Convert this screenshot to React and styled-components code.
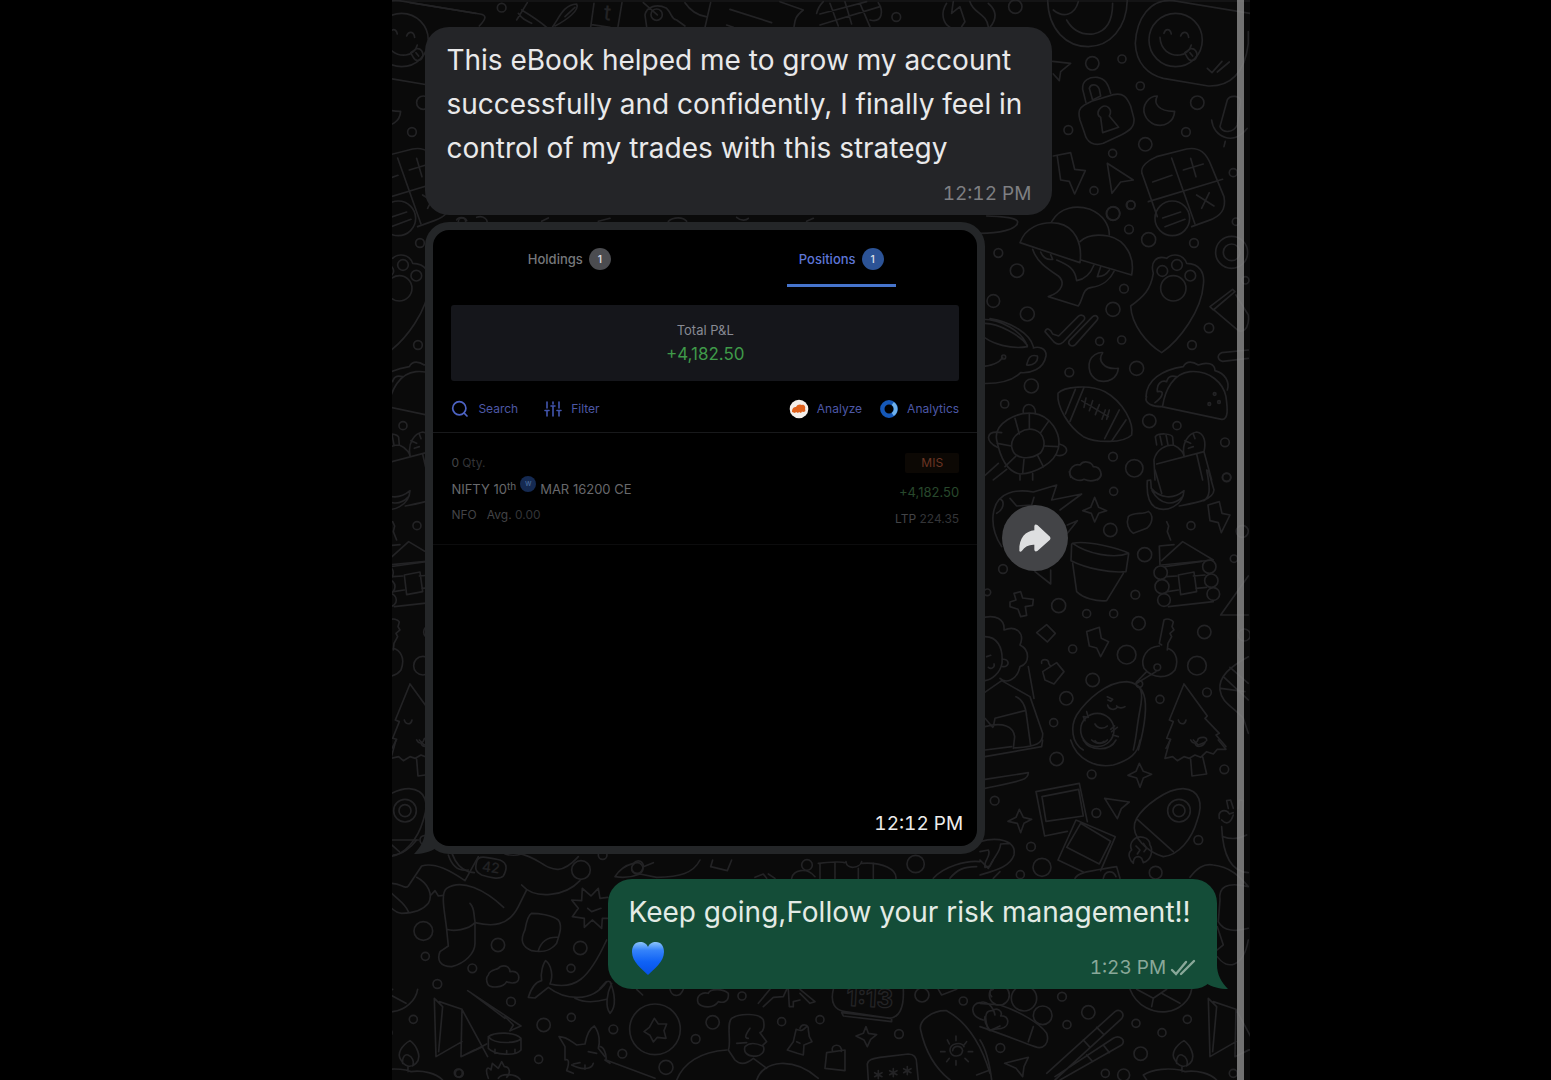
import React from "react";
import styled, { createGlobalStyle } from "styled-components";

// Wallpaper doodles. Each tile has its own origin and is drawn at three times
// its size; circles are [x, y, radius].
const sideTiles = [
  {
    x: 820,
    y: 0,
    paths: [
      "M683 0C685 90 740 140 805 140C870 138 920 85 922 0",
      "M740 60C760 95 790 105 820 102C860 95 878 60 878 10M700 30C730 55 765 45 775 5",
      "M1290 40L1060 2C990 -5 950 55 946 130C948 190 985 225 1030 235L1165 258C1230 260 1275 220 1285 130V95",
      "M1020 112C1022 150 1050 168 1080 165C1100 162 1110 150 1114 135",
      "M1032 100C1036 86 1050 84 1054 102M1082 108C1088 92 1104 94 1106 112",
      "M1094 158L1112 146C1124 144 1134 156 1130 170C1124 186 1108 184 1102 172ZM1110 158L1118 168",
      "M1162 205L1176 218L1206 184M1192 216L1228 186",
      "M698 184L752 190L722 215L718 242L700 222",
      "M798 308L788 268C785 240 810 230 832 232C855 236 864 250 872 280M808 265C812 250 832 252 838 268L842 288L818 300Z",
      "M780 360C770 325 785 318 815 304L880 284C910 278 920 290 932 318L942 356C944 380 930 392 905 404L850 430C820 440 800 425 794 400Z",
      "M842 352L848 398L896 382L868 348C880 325 858 312 844 322C830 332 832 348 842 352",
      "M1012 288C1000 310 1015 335 1064 334C1062 365 1035 382 1005 374C975 362 962 330 980 305C990 292 1002 288 1012 288Z",
      "M1200 380L1222 300C1230 284 1262 286 1262 305L1252 375C1240 400 1208 400 1200 380M1175 360C1180 410 1240 440 1282 385M1216 424L1212 440",
      "M700 468L752 458L764 508L796 512L764 582L748 544L722 540L712 470",
      "M862 490L940 540L902 546L876 580Z",
      "M966 520C960 500 985 480 1010 470L1100 447C1140 440 1160 460 1175 500L1212 590C1220 630 1200 650 1165 662L1115 680",
      "M966 520L1012 650M1055 474L1125 672M985 605L1208 538",
      "M998 546L1056 526M1090 510L1150 492M1112 475L1128 530M1130 585L1182 618M1145 625L1168 578",
    ],
    circles: [
      [1067, 120, 80], [817, 190, 20], [906, 177, 12], [961, 258, 12],
      [1132, 308, 20], [745, 390, 13], [1098, 396, 13], [976, 433, 20],
      [878, 460, 12], [1240, 518, 12], [822, 572, 12], [880, 640, 20],
      [932, 615, 13], [586, 20, 20],
    ],
  },
  {
    x: 980,
    y: 200,
    paths: [
      "M120 128C135 85 180 62 235 70C285 80 308 130 300 188Z",
      "M215 65C240 20 290 15 330 28C370 45 388 75 388 105",
      "M300 125C320 105 350 102 385 108C440 120 465 175 455 225L303 180",
      "M158 148C170 185 200 205 235 228C255 245 250 275 205 290L295 318C310 300 305 265 335 262C370 258 392 235 402 214",
      "M182 156C190 175 205 180 218 178L212 164M230 180C265 195 285 205 290 242C315 238 330 225 342 195M362 200L352 230C372 230 380 222 388 210",
      "M520 220C510 185 530 165 560 175C575 160 610 160 620 190C660 190 675 220 670 255C665 330 600 420 545 458C500 430 455 375 452 318C490 290 512 270 520 220Z",
      "M0 100C50 100 115 90 113 65C108 50 60 50 20 48",
      "M195 395C200 380 212 388 218 402L236 408L294 350C304 340 320 350 312 360L250 426C240 436 232 434 222 426Z",
      "M268 422L338 350C350 342 358 354 350 362L286 434C274 444 262 432 268 422Z",
      "M0 358C60 355 130 395 142 440C100 448 30 435 0 400M15 370C55 370 120 405 142 436M160 440C150 400 90 365 30 356M160 444C175 438 200 445 198 468C190 510 150 520 122 518C90 550 40 552 0 550",
      "M140 495C145 475 150 462 172 468C176 485 160 498 140 495ZM0 500C40 498 58 488 68 472",
      "M368 458C352 480 370 510 415 505C412 535 385 550 355 542C322 528 318 482 345 464C352 460 360 456 368 458Z",
      "M234 580C250 560 330 552 375 575C430 605 462 670 455 705C430 730 350 730 310 710C265 680 230 620 234 580Z",
      "M286 568L256 642M312 562L270 664M418 630L374 716M438 660L396 722",
      "M305 602L385 650M318 594L312 622M338 602L328 632M358 614L346 644M376 630L366 658M388 630L380 658",
      "M498 590C500 540 545 510 610 500C620 480 640 485 655 495C680 485 705 490 705 512C735 520 750 545 742 570M500 590C490 610 520 620 545 620L725 658C750 660 740 610 738 590C730 550 690 510 630 515C580 520 555 570 548 618M525 608C550 590 555 570 532 575C530 550 545 540 560 545C565 525 580 528 590 530",
      "M690 320L758 268L765 275L700 330ZM700 328L775 392C800 400 808 370 805 345L768 285",
      "M805 450L725 458C710 465 712 480 728 484L805 475",
      "M50 720C40 670 110 635 160 640C210 645 245 700 235 745C225 790 165 820 120 822C80 815 60 770 50 720ZM95 740C92 705 135 680 165 690C195 700 200 740 180 760C150 780 100 780 95 740Z",
      "M148 642L148 686M105 655L118 702M52 730L94 738M75 800L108 768M128 820L132 778M190 800L172 765M235 740L192 738M205 665L182 698",
      "M130 638C125 605 168 605 166 640M52 742C15 725 15 690 65 698M228 765C260 775 275 740 238 732M55 790L0 840M80 808L40 840M120 825V840M158 820V840",
      "M272 832C262 805 285 790 300 795C310 780 335 785 340 800C365 800 370 830 352 840",
      "M530 735L526 710C535 698 575 700 578 712L580 735M540 708L546 735M558 704L564 735M525 840L522 780C530 745 560 735 580 735C605 745 612 765 612 768M530 792L672 755L695 840M650 762L668 840M612 765C605 730 625 700 650 696C675 700 678 730 672 755M615 722L632 730M640 702L645 716M625 745L640 740",
      "M548 54L602 36M555 80L615 58",
    ],
    circles: [
      [399, 41, 20], [453, 15, 12], [447, 88, 13], [506, 119, 21],
      [577, 55, 52], [642, 129, 13], [768, 65, 11], [755, 157, 48],
      [755, 157, 25], [796, 241, 11], [55, 159, 13], [111, 212, 20],
      [40, 303, 19], [142, 342, 21], [432, 266, 13], [399, 328, 21],
      [359, 424, 12], [425, 420, 12], [547, 213, 16], [591, 195, 16],
      [631, 227, 16], [580, 265, 38], [687, 384, 14], [636, 435, 13],
      [71, 471, 6], [268, 517, 13], [470, 505, 21], [154, 558, 21],
      [74, 612, 12], [508, 663, 20], [591, 677, 12], [735, 727, 13],
      [399, 770, 13], [463, 805, 26], [704, 582, 4], [717, 606, 4],
      [688, 612, 4], [740, 832, 12],
    ],
  },
  {
    x: 980,
    y: 470,
    paths: [
      "M268 5C270 30 300 35 312 28C335 38 362 30 364 12",
      "M65 230C25 170 30 90 85 70C110 60 140 62 160 66L230 45L215 90L305 72L240 120M90 85L110 108L155 105L162 82M50 130C70 120 75 95 62 88M262 165L292 152L262 190M165 305L212 342V300",
      "M344 82L356 112L380 122L356 130L344 156L334 130L308 122L332 112Z",
      "M445 140C460 125 490 135 505 124C522 135 518 160 500 175L460 190C445 180 438 160 445 140Z",
      "M502 32L512 30L514 55C540 85 580 90 612 62C610 105 560 130 525 112C500 95 500 60 502 32ZM516 62C540 105 580 110 608 80M525 0L545 70M598 108C650 98 700 90 702 60L685 0M672 92C690 80 692 60 680 0",
      "M684 105L718 95L726 130L750 135L724 188L715 158L690 152Z",
      "M278 220C320 210 420 235 446 250C400 268 320 250 278 220ZM275 222L273 272C320 295 390 310 438 305L446 252M278 280L290 365C310 385 350 395 380 392L430 310",
      "M540 285L538 228L582 224M545 272L608 215L700 270L545 285M560 155L566 168L562 185L572 210",
      "M555 290L665 274M560 320L590 318M640 318L675 315M562 365L595 360M648 355L680 352M565 410L700 395M595 315L642 306L650 365L602 374Z",
      "M102 370L122 365L128 384L160 388L158 406L136 410L140 436L122 440L114 418L90 410L90 396L108 390Z",
      "M170 488L200 464L226 490L202 516Z",
      "M320 485L358 472L364 505L386 515L362 560L350 534L328 528Z",
      "M805 318L722 435H805",
      "M545 525L538 520L552 450C560 444 576 448 580 456L576 470L582 480L570 490L575 500L564 520L562 540M538 528C500 530 480 565 492 595C520 630 565 625 585 600C600 560 580 540 562 535M528 605L470 640M500 605L470 636",
      "M0 445C50 430 75 450 72 480C110 465 135 490 120 525C150 540 150 580 120 590C110 635 75 640 60 625M15 500C50 500 70 530 66 580C60 610 35 630 15 632M66 568C90 565 90 592 68 590M20 560L32 556M25 592C35 600 45 590 42 582M10 670L65 632L150 680L188 790C190 820 170 830 100 834M145 590L162 685M108 680C130 690 138 710 140 740L152 828M15 745L38 772M40 770L45 745L135 722M15 770C70 755 100 770 104 800L100 835",
      "M185 580C180 565 208 565 206 580L212 590M188 605L230 578L252 605L222 642L195 630Z",
      "M310 840C275 820 270 770 290 735C320 690 380 635 440 635C490 640 490 670 480 720C470 770 470 800 460 840M455 638C495 650 500 690 495 740C490 790 480 820 475 840",
      "M382 680L398 688L392 694L384 690M410 708C415 715 428 715 435 710M383 705C386 720 405 722 412 712M345 762C355 780 375 775 382 768M345 812C350 822 368 820 372 814M320 725L325 742L310 740L315 752M395 785L412 772M398 795L415 800M392 778L404 768",
      "M612 642L682 738L675 745L718 790L708 795L738 830M612 642L568 750L580 755L560 805L572 808L558 835M595 750C600 765 615 765 618 750M632 810C640 825 652 820 655 806C665 800 682 800 680 812M645 820C650 835 670 830 676 815",
      "M805 560C750 590 715 620 720 660C725 700 760 710 790 745L805 790M750 592L805 640M730 620L805 690M722 655L795 665",
    ],
    circles: [
      [401, 64, 12], [740, 22, 13], [391, 180, 20],
      [633, 167, 12], [787, 184, 18], [494, 254, 21], [762, 266, 11],
      [69, 297, 13], [542, 308, 20], [688, 290, 20], [546, 350, 21],
      [694, 332, 20], [552, 390, 19], [700, 372, 19], [466, 374, 13],
      [236, 407, 21], [320, 431, 12], [401, 431, 12], [476, 460, 20],
      [673, 486, 20], [278, 537, 12], [440, 554, 28], [651, 587, 28],
      [793, 495, 18], [532, 592, 10], [478, 642, 10], [338, 630, 20],
      [259, 685, 20], [540, 688, 12], [681, 667, 13], [221, 758, 12],
      [352, 780, 50], [22, 367, 10],
    ],
  },
  {
    x: 980,
    y: 740,
    paths: [
      "M272 0C290 60 350 85 400 75C450 60 475 40 480 0M310 0C330 35 390 35 408 0M335 0C350 15 372 12 382 0",
      "M15 50L185 20L188 0M15 30L95 20M15 118L145 98C145 120 125 122 15 145",
      "M570 0L555 55L578 50L592 62L612 50L628 55L645 45L662 52L680 35L700 42L712 28L738 28L715 0M640 0L655 15L672 8M632 58L636 108L680 102L668 50",
      "M478 70L490 94L515 103L490 114L480 142L470 114L444 106L468 94Z",
      "M118 208L130 232L155 238L132 250L122 278L112 250L84 244L108 232Z",
      "M168 155L298 130L322 245M168 155L194 288L262 274M186 170L296 148L310 228L198 244Z",
      "M288 240L406 290L362 392M288 240L234 360L310 396M302 250L392 304L358 372L260 322Z",
      "M374 175L448 186L424 206L412 236Z",
      "M470 235C490 200 560 145 610 146C660 150 670 190 652 240C635 300 595 345 550 350C500 335 455 290 464 250ZM472 238L580 335",
      "M490 292C465 285 445 310 455 330C440 340 450 362 460 370C460 350 475 345 485 355L490 368C515 360 520 330 510 315C510 300 500 295 490 292M468 318L480 330L472 342M490 310L500 325L492 335",
      "M718 235C712 210 740 205 748 222L760 218M745 205L740 182L752 180L760 205M775 205L778 180L790 182L788 210M725 240C745 260 755 240 760 225M725 260C728 330 745 395 805 398M730 290C755 300 780 295 800 285",
      "M0 305C50 290 110 300 102 345C90 380 50 390 0 405M0 335L25 330C35 350 10 360 15 382L30 378C40 350 60 340 62 312L90 310",
      "M285 415C295 395 340 392 410 380L420 415M370 415C375 390 400 390 408 410",
      "M450 748C470 800 520 820 560 815C600 810 630 780 635 748M470 748L520 775L560 748M520 775L515 800M545 760L600 790",
      "M685 775L690 950L768 905M685 775L710 800L698 935M700 785L768 808L765 950M768 808L845 950M765 950L830 920M805 930L765 950",
      "M0 790L60 795C120 815 180 850 200 880C210 910 190 930 165 920C110 900 60 880 0 860M160 860L145 905M25 870C15 840 10 810 38 812C50 800 70 815 62 828C90 825 90 860 65 865Z",
      "M200 1000L405 815C420 805 436 820 425 836L225 1020M225 1010L400 895C418 884 440 900 425 915L240 1020M350 862L372 884M310 900L328 920M370 915L388 938M320 945L338 965",
      "M74 970L145 952L132 980L128 1010L108 985Z",
      "M585 960C570 940 590 915 612 902C630 915 650 950 630 970C615 985 595 980 585 960ZM590 970C588 950 598 942 606 945C620 950 625 965 620 978M606 980V995M490 1005C520 985 570 985 600 990L615 995C650 990 690 1000 710 1020M490 1005L500 1020",
      "M0 900C20 930 30 980 35 1020",
    ],
    circles: [
      [230, 57, 20], [335, 103, 13], [733, 88, 13], [44, 182, 13],
      [349, 219, 13], [597, 212, 34], [597, 212, 18], [655, 300, 13],
      [153, 320, 13], [186, 382, 27], [121, 404, 12], [527, 398, 19],
      [246, 770, 13], [58, 765, 30], [132, 775, 38], [188, 826, 28],
      [325, 817, 20], [261, 854, 12], [468, 850, 12], [546, 878, 12],
      [622, 838, 12], [61, 924, 13], [482, 941, 20], [376, 1000, 12],
      [431, 1005, 18], [760, 1000, 12],
    ],
  },
];

const innerTiles = [
  {
    x: 390,
    y: 0,
    paths: [
      "M60 8L270 42C290 45 290 55 268 78M395 30C420 45 450 65 470 82M380 60L412 8M385 40C395 55 405 60 425 70",
      "M488 80C510 50 520 15 560 12C570 30 530 60 495 78M525 50L555 22M612 10L602 82M696 8L684 80M605 74L660 82",
      "M760 8L802 45M765 45C770 20 800 10 830 25C850 45 840 55 860 60L885 78M765 45L770 80M885 8C900 30 920 45 948 50M962 8L945 82",
      "M1020 28L1145 68M1010 75L1030 82M1170 5L1240 30C1215 50 1215 60 1212 82",
      "M1280 40C1285 20 1295 10 1300 5M1290 42L1430 5M1320 10L1345 78M1365 5L1385 72M1410 10L1440 80M1290 75L1470 20M1440 60C1480 70 1480 30 1465 8",
      "M1670 10C1650 40 1660 70 1680 82M1690 5L1685 40L1710 20L1725 65L1715 80M1740 5C1750 40 1790 40 1795 80M1795 10C1830 40 1810 70 1800 82",
      "M200 660C205 650 225 650 230 662M260 652C280 645 295 660 290 668M455 664L475 654M625 664L660 655M835 664C850 650 880 650 890 664M1040 652C1055 665 1070 660 1075 655M1250 664L1270 655",
    ],
    circles: [[335, 23, 13], [800, 44, 17], [1519, 51, 13]],
    labels: [{ text: "t", x: 650, y: 60, size: 64, turn: 6 }],
  },
  {
    x: 600,
    y: 860,
    paths: [
      "M45 50C60 25 80 15 100 10C115 -5 130 5 130 20C125 45 105 45 95 30M45 50C70 55 100 50 120 42L170 52M130 20L160 8M170 52C240 50 280 40 300 0M338 0L332 20L382 32L395 0",
      "M465 52L490 42L500 55M505 42L525 55M575 55C580 30 620 20 645 50M655 10C690 5 730 5 735 8M738 5C740 30 780 25 785 5M785 10C850 5 890 30 888 55M660 10V55M705 8V55M775 25V55M820 10V55",
      "M1000 55C1030 20 1100 0 1140 5M1050 55C1070 30 1090 20 1130 20M1140 0L1165 25L1180 0M1180 55L1200 35",
      "M0 385C15 370 20 360 30 365C45 400 50 440 30 460C15 440 20 400 35 370",
      "M295 430C285 405 310 395 325 400C330 385 370 385 385 400C388 425 370 430 355 425C340 445 310 445 295 430ZM110 388L128 405M210 388C215 410 240 415 250 388",
      "M475 430L510 388M490 440L520 412L550 410L560 388M565 388L568 440L580 440L580 425L600 420M600 388L645 425L630 430L600 400",
      "M700 388C690 430 705 450 735 455L870 475C905 470 912 430 910 388M725 458L875 475V485L730 468Z",
      "M163 475L175 492L200 492L192 512L198 535L172 532L160 546L150 526L132 515L148 502Z",
      "M385 570C395 550 378 490 395 475C420 458 480 460 490 480C495 500 490 515 480 518L500 545L488 556C500 575 480 590 465 588C440 590 430 575 435 560C450 545 470 550 488 558M385 570L405 600C420 615 440 612 460 595L500 625M440 548L410 550M450 505C440 520 430 535 445 535M230 660C250 610 300 575 380 570M470 660C490 600 580 590 655 655",
      "M588 508C605 515 610 510 620 500M600 505C605 490 628 492 625 510L628 530L636 545L612 555L610 585L592 580L562 570L580 545L588 510M590 545L600 550",
      "M680 578L735 570V632L675 625ZM697 572C692 550 728 550 724 574",
      "M798 500L805 520L830 524L812 538L802 560L792 540L768 528L790 520Z",
      "M962 510C955 480 1000 450 1040 452C1090 480 1140 540 1170 640M962 510C975 570 1000 620 1050 660M1130 645L1170 630",
      "M1058 572C1060 555 1085 555 1088 572C1085 592 1055 595 1050 572C1050 548 1085 545 1092 560M1068 528V542M1042 540L1048 552M1100 545L1092 555M1022 575H1035M1105 575H1118M1040 605L1048 595M1068 615V602M1105 605L1095 595",
      "M805 660L802 612C805 598 820 596 840 592L925 582C945 582 950 595 950 610L955 660",
      "M835 632V656M824 638L846 650M846 638L824 650M880 626V650M869 632L891 644M891 632L869 644M922 620V644M911 626L933 638M933 626L911 638",
      "M1150 480C1110 470 1110 430 1140 428C1160 420 1180 440 1185 465M1155 470C1150 490 1165 500 1170 512L1200 498M1175 410C1165 400 1170 388 1180 388",
      "M0 560C10 560 20 580 18 600L165 655M1015 388L1025 405L1070 388",
    ],
    circles: [
      [112, 25, 17], [621, 15, 16], [947, 12, 26], [426, 408, 12],
      [338, 487, 20], [40, 508, 13], [287, 537, 13], [165, 508, 76],
      [545, 485, 12], [660, 479, 12], [897, 522, 13], [1090, 423, 12],
      [966, 405, 21], [67, 581, 13], [198, 622, 21],
    ],
    labels: [
      { text: "1:13", x: 808, y: 440, size: 76, turn: 3, outline: true },
    ],
  },
  {
    x: 385,
    y: 840,
    paths: [
      "M20 130C50 130 60 150 70 138L110 78C150 65 200 95 240 122L280 50M190 45C200 75 220 95 250 90M95 112C130 130 145 165 130 190C110 215 80 220 50 220C35 218 25 210 20 205M20 160C40 180 60 190 70 215M138 165L150 152L160 168L175 166",
      "M185 268C180 220 165 160 185 145C230 115 300 150 356 202M185 268C205 275 250 270 270 248C320 260 370 260 400 200L425 150M255 190C270 205 265 220 270 245M185 268L190 318L165 335C155 360 165 380 200 380C240 370 270 340 270 310V245",
      "M275 65C280 45 300 50 345 60C370 70 365 90 355 108C345 120 310 112 290 105C270 95 270 85 275 65Z",
      "M400 40C460 50 480 90 520 88C550 85 570 60 580 50M410 135C450 180 540 170 585 122M360 42C380 48 390 48 410 42",
      "M440 220C460 220 500 225 520 240C535 260 520 290 515 310C500 330 480 340 440 332C410 320 405 300 420 270C425 240 430 225 440 220ZM460 332C470 300 490 290 520 292",
      "M668 172L645 175L640 145L618 168L592 145L590 182L560 180L580 205L562 230L598 235V262L622 240L650 265L652 235H668M608 205L620 215L648 205",
      "M310 405C315 385 340 392 345 380C365 372 375 385 375 395C395 390 405 405 400 420C395 432 375 430 365 425C355 445 315 445 308 432C303 420 305 410 310 405Z",
      "M430 472C440 440 455 425 470 422C465 400 475 370 482 362C500 375 505 410 495 432C570 450 610 420 665 300M430 472L450 474L490 442C540 480 620 490 665 425M570 475C600 490 640 485 665 478",
      "M270 630L305 612M360 530L385 555L375 572",
      "M310 590C330 575 390 575 408 595C400 610 330 615 310 590ZM310 590V625C330 645 390 650 408 630V595M330 628V640M365 632V642M390 628V640",
      "M22 0L100 0M25 45C50 45 80 20 95 0",
      "M522 590L540 620V660C550 655 555 665 545 692L565 700M522 590C545 590 560 605 575 615L600 612C605 585 615 565 628 558C645 580 645 610 640 625L660 650M565 672L585 668M610 635L635 640M560 675C590 690 620 690 625 670M600 675V688M660 660L675 670",
      "M310 715C300 690 305 675 318 690L322 670L340 685L350 665L358 680C375 680 378 700 365 712M340 715C350 700 390 700 405 718",
      "M248 452L408 558L375 572M260 460L360 535",
    ],
    circles: [
      [588, 90, 28], [115, 273, 28], [121, 349, 12], [339, 315, 20],
      [262, 385, 13], [157, 432, 13], [378, 485, 13], [558, 385, 12],
      [586, 324, 20], [476, 555, 20], [559, 532, 12],
      [461, 658, 12], [220, 699, 12], [653, 45, 13],
    ],
    labels: [{ text: "42", x: 316, y: 97, size: 42, turn: 8 }],
  },
  {
    x: 980,
    y: 740,
    paths: [
      "M720 480C715 440 740 425 805 440M720 480L715 545C730 575 770 575 805 565M712 560L730 615L712 630M712 650C740 690 790 685 805 600M630 412C650 385 670 370 700 375C750 380 780 410 805 440",
    ],
    circles: [],
  },
];

function Tile({ tile }) {
  return (
    <g transform={`translate(${tile.x} ${tile.y}) scale(0.3333)`}>
      {tile.paths.map((d) => (
        <path key={d} d={d} />
      ))}
      {tile.circles.map(([cx, cy, r]) => (
        <circle key={`${cx}-${cy}-${r}`} cx={cx} cy={cy} r={r} />
      ))}
      {(tile.labels || []).map(({ text, x, y, size, turn, outline }) => (
        <DoodleText
          key={text}
          x={x}
          y={y}
          fontSize={size}
          transform={`rotate(${turn} ${x} ${y})`}
          $outline={outline}
        >
          {text}
        </DoodleText>
      ))}
    </g>
  );
}

function Wallpaper() {
  return (
    <Doodles
      viewBox="392 0 858 1080"
      preserveAspectRatio="xMinYMin slice"
      aria-hidden="true"
    >
      <g id="side">
        {sideTiles.map((tile) => (
          <Tile key={tile.y} tile={tile} />
        ))}
      </g>
      <use href="#side" x="-774" />
      {innerTiles.map((tile) => (
        <Tile key={`${tile.x}-${tile.y}`} tile={tile} />
      ))}
    </Doodles>
  );
}

function BubbleTail({ side, color }) {
  return (
    <Tail $side={side} viewBox="0 0 28 24" aria-hidden="true">
      <path d="M17 0C17 9 21 17 28 24C20 24 12 22 6 18V0Z" fill={color} />
    </Tail>
  );
}

function SearchIcon() {
  return (
    <svg width="18" height="18" viewBox="0 0 18 18" fill="none" stroke="#4d63c4" strokeWidth="1.7" strokeLinecap="round">
      <circle cx="8.3" cy="8.3" r="6.6" />
      <path d="M13.2 13.2L16 16" />
    </svg>
  );
}

function FilterIcon() {
  return (
    <svg width="18" height="18" viewBox="0 0 18 18" fill="none" stroke="#4356ae" strokeWidth="1.6" strokeLinecap="round">
      <path d="M3 2V8M3 11V16M9 2V4M9 7V16M15 2V8M15 11V16M1 10.5H5M7 6H11M13 10.5H17" />
    </svg>
  );
}

function AnalyzeIcon() {
  return (
    <svg width="20" height="20" viewBox="0 0 20 20">
      <circle cx="10" cy="10" r="9.3" fill="#f4efeb" />
      <path d="M3 13C3 9 5 8 7 8C8 5 12 5 13 6C15 5 17 8 16 10C17 12 16 13 14 13L13 12.5L12 14L10 13L9 14L7 13L6 14Z" fill="#e0611c" />
    </svg>
  );
}

function AnalyticsIcon() {
  return (
    <svg width="18" height="18" viewBox="0 0 18 18" fill="none" strokeWidth="4.4">
      <circle cx="9" cy="9" r="6.7" stroke="#1558b8" />
      <path d="M12.8 3.5A6.7 6.7 0 0 1 12.8 14.5" stroke="#6fb1ea" strokeWidth="3.6" />
    </svg>
  );
}

function ForwardIcon() {
  return (
    <svg width="34" height="30" viewBox="116 156 102 90" aria-hidden="true">
      <path
        d="M120 240C118 200 140 180 165 178V165Q167 158 174 162L212 197Q215 202 212 206L174 240Q166 244 165 236V221C150 220 136 226 128 239Q123 245 120 240Z"
        fill="#dedfe0"
      />
    </svg>
  );
}

function BlueHeart() {
  return (
    <svg width="36" height="36" viewBox="-1 -2 36 36" role="img" aria-label="blue heart">
      <defs>
        <linearGradient id="heart" x1="0" y1="0" x2="0" y2="1">
          <stop offset="0" stopColor="#8cc4fb" />
          <stop offset="0.25" stopColor="#3583fa" />
          <stop offset="0.6" stopColor="#0f62f6" />
          <stop offset="1" stopColor="#0650e6" />
        </linearGradient>
      </defs>
      <path
        d="M18 34C12 28 2 21 2 11C2 5 5 1 10 1C14 1 17 3 18 6C19 3 22 1 26 1C31 1 34 5 34 11C34 21 24 28 18 34Z"
        fill="url(#heart)"
      />
    </svg>
  );
}

function DeliveredIcon() {
  return (
    <svg width="26" height="18" viewBox="0 0 26 18" fill="none" stroke="#89a899" strokeWidth="2.4" strokeLinecap="round" aria-label="Delivered">
      <path d="M2 11L6 15L16 3M11 15L24 2" />
    </svg>
  );
}

function App() {
  return (
    <Page>
      <GlobalStyle />
      <Chat>
        <Wallpaper />
        <Messages>
          <Incoming>
            <Text>
              This eBook helped me to grow my account successfully and
              confidently, I finally feel in control of my trades with this
              strategy
            </Text>
            <Time>12:12 PM</Time>
          </Incoming>

          <PhotoRow>
            <PhotoBubble>
              <Photo>
                <Tabs>
                  <Tab type="button">
                    Holdings <Count>1</Count>
                  </Tab>
                  <Tab type="button" $active>
                    Positions <Count $active>1</Count>
                  </Tab>
                </Tabs>
                <Summary>
                  <SummaryLabel>Total P&amp;L</SummaryLabel>
                  <SummaryValue>+4,182.50</SummaryValue>
                </Summary>
                <Toolbar>
                  <ToolGroup $gap="26px">
                    <Tool type="button" $gap="9px">
                      <SearchIcon />
                      Search
                    </Tool>
                    <Tool type="button" $gap="9px">
                      <FilterIcon />
                      Filter
                    </Tool>
                  </ToolGroup>
                  <ToolGroup $gap="18px">
                    <Tool type="button" $gap="8px">
                      <AnalyzeIcon />
                      Analyze
                    </Tool>
                    <Tool type="button" $gap="9px">
                      <AnalyticsIcon />
                      Analytics
                    </Tool>
                  </ToolGroup>
                </Toolbar>
                <Position>
                  <div>
                    <Meta>
                      <b>0</b> Qty.
                    </Meta>
                    <Instrument>
                      NIFTY 10<sup>th</sup>
                      <Weekly>w</Weekly>
                      MAR 16200 CE
                    </Instrument>
                    <Meta>
                      <b>NFO</b> &nbsp; <b>Avg.</b> 0.00
                    </Meta>
                  </div>
                  <Result>
                    <Product>MIS</Product>
                    <Profit>+4,182.50</Profit>
                    <Meta>
                      <b>LTP</b> 224.35
                    </Meta>
                  </Result>
                </Position>
                <PhotoTime>12:12 PM</PhotoTime>
              </Photo>
              <BubbleTail side="left" color="#242628" />
            </PhotoBubble>
            <Forward type="button" aria-label="Forward">
              <ForwardIcon />
            </Forward>
          </PhotoRow>

          <Outgoing>
            <Text>Keep going,Follow your risk management!!</Text>
            <Reply>
              <BlueHeart />
              <Status>
                1:23 PM
                <DeliveredIcon />
              </Status>
            </Reply>
            <BubbleTail side="right" color="#144d38" />
          </Outgoing>
        </Messages>
        <ScrollTrack />
      </Chat>
    </Page>
  );
}

export default App;

const GlobalStyle = createGlobalStyle`
  * {
    box-sizing: border-box;
  }
  body {
    margin: 0;
    background: #000;
    font-family: Inter, "Liberation Sans", sans-serif;
  }
  p {
    margin: 0;
  }
  button {
    border: 0;
    padding: 0;
    background: none;
    font-family: inherit;
    cursor: pointer;
  }
  svg {
    flex-shrink: 0;
  }
`;

const Page = styled.main`
  display: grid;
  grid-template-columns: 25.3% 1fr 19.4%;
  min-height: 100vh;
  background: #000;
`;

const Chat = styled.section`
  grid-column: 2;
  position: relative;
  overflow: hidden;
  background: #0a0a0a;
  box-shadow: inset 0 2px #141415;
`;

const Doodles = styled.svg`
  position: absolute;
  inset: 0;
  width: 100%;
  height: 100%;
  fill: none;
  stroke: #232325;
  stroke-width: 5;
  stroke-linecap: round;
  stroke-linejoin: round;
`;

const DoodleText = styled.text`
  fill: ${({ $outline }) => ($outline ? "none" : "#232325")};
  stroke-width: ${({ $outline }) => ($outline ? 4 : 1)};
  font-weight: ${({ $outline }) => ($outline ? 700 : 400)};
  text-anchor: middle;
`;

const ScrollTrack = styled.div`
  position: absolute;
  top: 0;
  right: 6px;
  bottom: 0;
  width: 7px;
  background: rgba(140, 140, 140, 0.8);
`;

const Messages = styled.div`
  position: relative;
  display: flex;
  flex-direction: column;
  padding: 27px 33px;
`;

const Bubble = styled.div`
  position: relative;
  border-radius: 24px;
  padding: 11px 21px 9px;
`;

const Incoming = styled(Bubble)`
  width: 79.2%;
  background: #242528;
  color: #e9e9ea;
`;

const Outgoing = styled(Bubble)`
  align-self: flex-end;
  width: 77%;
  margin-top: 25px;
  background: #144d38;
  color: #e3ebe5;
`;

const Tail = styled.svg`
  position: absolute;
  bottom: 0;
  width: 28px;
  height: 24px;
  ${({ $side }) =>
    $side === "left" ? "left: -11px; transform: scaleX(-1);" : "right: -11px;"}
`;

const Text = styled.p`
  font-size: 28px;
  line-height: 44px;
`;

const Time = styled.p`
  margin-top: 12px;
  text-align: right;
  font-size: 19px;
  line-height: 24px;
  font-variant-numeric: tabular-nums;
  color: #7e7f82;
`;

const Reply = styled.div`
  display: flex;
  align-items: center;
  justify-content: space-between;
  min-height: 46px;
`;

const Status = styled.p`
  display: flex;
  align-items: center;
  align-self: flex-end;
  gap: 4px;
  font-size: 19px;
  line-height: 24px;
  font-variant-numeric: tabular-nums;
  color: #89a899;
`;

const PhotoRow = styled.div`
  display: flex;
  align-items: center;
  gap: 17px;
  margin-top: 7px;
`;

const PhotoBubble = styled.div`
  position: relative;
  width: 70.7%;
  padding: 8px;
  border-radius: 24px;
  background: #242628;
`;

const Photo = styled.div`
  position: relative;
  z-index: 1;
  display: flex;
  flex-direction: column;
  min-height: 616px;
  border-radius: 16px;
  overflow: hidden;
  background: #000;
`;

const Tabs = styled.div`
  display: grid;
  grid-template-columns: 1fr 1fr;
  justify-items: center;
`;

const Tab = styled.button`
  display: flex;
  align-items: center;
  gap: 6px;
  padding: 18px 12px 14px;
  border-bottom: 3px solid ${({ $active }) => ($active ? "#4674cc" : "transparent")};
  font-size: 13px;
  font-weight: 500;
  color: ${({ $active }) => ($active ? "#5d76d6" : "#77787c")};
`;

const Count = styled.span`
  width: 22px;
  border-radius: 50%;
  background: ${({ $active }) => ($active ? "#2c5396" : "#4b4c50")};
  color: #d6dae0;
  font-size: 10px;
  font-weight: 600;
  line-height: 22px;
  text-align: center;
`;

const Summary = styled.div`
  margin: 18px 18px 0;
  padding: 13px 0 15px;
  border-radius: 3px;
  background: #15161b;
  text-align: center;
  line-height: 24px;
`;

const SummaryLabel = styled.p`
  font-size: 13px;
  color: #888a94;
`;

const SummaryValue = styled.p`
  font-size: 17px;
  color: #3f9a49;
`;

const Toolbar = styled.div`
  display: flex;
  justify-content: space-between;
  padding: 18px 18px 13px;
  border-bottom: 1px solid #18191b;
`;

const ToolGroup = styled.div`
  display: flex;
  gap: ${({ $gap }) => $gap};
`;

const Tool = styled.button`
  display: flex;
  align-items: center;
  gap: ${({ $gap }) => $gap};
  font-size: 12px;
  line-height: 20px;
  color: #4d58a6;
`;

const Position = styled.div`
  display: flex;
  justify-content: space-between;
  padding: 17px 18px 12px;
  border-bottom: 1px solid #0c0c0d;
`;

const Meta = styled.p`
  font-size: 12px;
  line-height: 26px;
  color: #333437;
  b {
    font-weight: 400;
    color: #434447;
  }
`;

const Instrument = styled.p`
  display: flex;
  align-items: center;
  font-size: 13px;
  line-height: 26px;
  color: #68696c;
  sup {
    font-size: 10px;
    line-height: 20px;
    align-self: flex-start;
  }
`;

const Weekly = styled.span`
  align-self: flex-start;
  width: 16px;
  height: 16px;
  margin: 0 4px;
  border-radius: 50%;
  background: #152a52;
  color: #50709f;
  font-size: 8px;
  line-height: 15px;
  text-align: center;
`;

const Result = styled.div`
  display: flex;
  flex-direction: column;
  align-items: flex-end;
`;

const Product = styled.span`
  margin: 3px 0 5px;
  padding: 0 16px;
  border-radius: 2px;
  background: #0c0804;
  color: #6b3523;
  font-size: 12px;
  line-height: 20px;
`;

const Profit = styled.p`
  font-size: 13px;
  line-height: 28px;
  color: #28482c;
`;

const PhotoTime = styled.p`
  margin-top: auto;
  padding: 0 14px 10px;
  text-align: right;
  font-size: 19px;
  line-height: 24px;
  font-variant-numeric: tabular-nums;
  color: #ececec;
`;

const Forward = styled.button`
  display: flex;
  align-items: center;
  justify-content: center;
  width: 66px;
  height: 66px;
  border-radius: 50%;
  background: #434447;
`;
